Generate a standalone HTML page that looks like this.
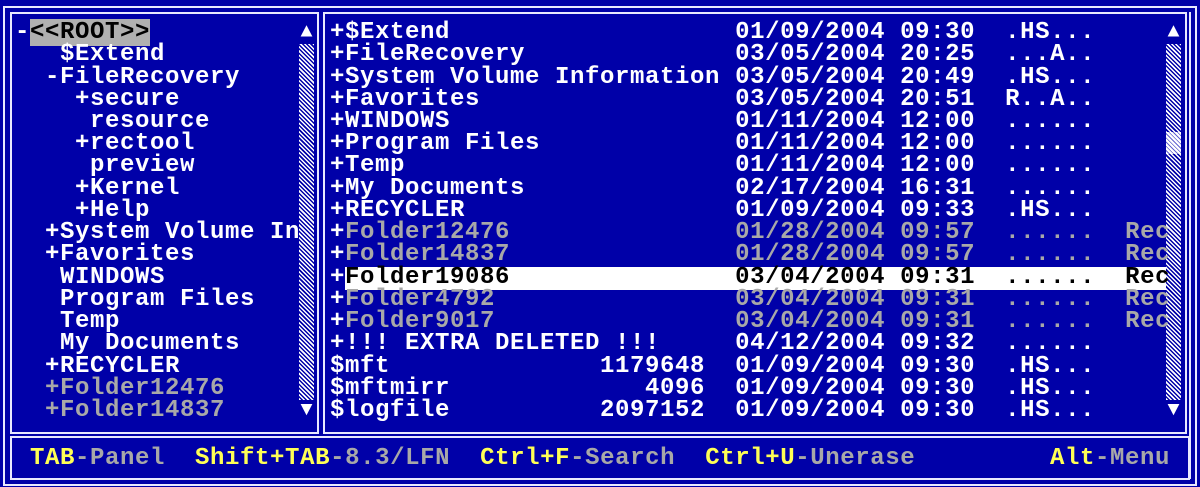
<!DOCTYPE html>
<html><head><meta charset="utf-8"><style>
body{margin:0;width:1200px;height:487px;background:#0000a8;overflow:hidden;position:relative;font-family:"Liberation Mono",monospace;font-weight:bold;font-size:24px;letter-spacing:0.6px;color:#fff}
.b{position:absolute;border:2px solid #e8e8ff}
pre{margin:0;position:absolute;font:inherit;letter-spacing:inherit;line-height:22px;white-space:pre}
.g{color:#a8a8a8}.y{color:#ffff55}
.hl{background:#fff;color:#000}
.rt{background:#b0b0b0;color:#000}
.sb{position:absolute;width:15px;background:repeating-linear-gradient(45deg,#fff 0 1.5px,#0000a8 1.5px 3px)}
.ar{position:absolute;font-size:20px;letter-spacing:0;line-height:22px;width:15px;text-align:center}
</style></head><body>
<div class="b" style="left:3px;top:6px;width:1190px;height:476px"></div>
<div class="b" style="left:10px;top:12px;width:305px;height:418px"></div>
<div class="b" style="left:323px;top:12px;width:860px;height:418px"></div>
<div class="b" style="left:10px;top:436px;width:1176px;height:40px"></div>
<div style="position:absolute;left:1189px;top:12px;width:2px;height:467px;background:#e8e8ff"></div>

<div class="hl" style="position:absolute;left:345px;top:267px;width:822px;height:23px"></div>

<pre style="left:15px;top:22px">-<span class="rt">&lt;&lt;ROOT&gt;&gt;</span></pre>
<pre style="left:15px;top:44.2px">   $Extend</pre>
<pre style="left:15px;top:66.5px">  -FileRecovery</pre>
<pre style="left:15px;top:88.7px">    +secure</pre>
<pre style="left:15px;top:111px">     resource</pre>
<pre style="left:15px;top:133.2px">    +rectool</pre>
<pre style="left:15px;top:155.4px">     preview</pre>
<pre style="left:15px;top:177.7px">    +Kernel</pre>
<pre style="left:15px;top:199.9px">    +Help</pre>
<pre style="left:15px;top:222.2px">  +System Volume In</pre>
<pre style="left:15px;top:244.4px">  +Favorites</pre>
<pre style="left:15px;top:266.6px">   WINDOWS</pre>
<pre style="left:15px;top:288.9px">   Program Files</pre>
<pre style="left:15px;top:311.1px">   Temp</pre>
<pre style="left:15px;top:333.4px">   My Documents</pre>
<pre style="left:15px;top:355.6px">  +RECYCLER</pre>
<pre style="left:15px;top:377.8px" class="g">  +Folder12476</pre>
<pre style="left:15px;top:400.1px" class="g">  +Folder14837</pre>

<div class="sb" style="left:299px;top:44px;height:356px"></div>
<div class="ar" style="left:299px;top:22px">▲</div>
<div class="ar" style="left:299px;top:400px">▼</div>
<div class="sb" style="left:1166px;top:44px;height:356px"></div>
<div style="position:absolute;left:1166px;top:132px;width:15px;height:22px;background:repeating-linear-gradient(45deg,#fff 0 2px,#6060d0 2px 3px)"></div>
<div class="ar" style="left:1166px;top:22px">▲</div>
<div class="ar" style="left:1166px;top:400px">▼</div>

<pre style="left:330px;top:22px">+$Extend                   01/09/2004 09:30  .HS...</pre>
<pre style="left:330px;top:44.2px">+FileRecovery              03/05/2004 20:25  ...A..</pre>
<pre style="left:330px;top:66.5px">+System Volume Information 03/05/2004 20:49  .HS...</pre>
<pre style="left:330px;top:88.7px">+Favorites                 03/05/2004 20:51  R..A..</pre>
<pre style="left:330px;top:111px">+WINDOWS                   01/11/2004 12:00  ......</pre>
<pre style="left:330px;top:133.2px">+Program Files             01/11/2004 12:00  ......</pre>
<pre style="left:330px;top:155.4px">+Temp                      01/11/2004 12:00  ......</pre>
<pre style="left:330px;top:177.7px">+My Documents              02/17/2004 16:31  ......</pre>
<pre style="left:330px;top:199.9px">+RECYCLER                  01/09/2004 09:33  .HS...</pre>
<pre style="left:330px;top:222.2px">+<span class="g">Folder12476               01/28/2004 09:57  ......  Rec</span></pre>
<pre style="left:330px;top:244.4px">+<span class="g">Folder14837               01/28/2004 09:57  ......  Rec</span></pre>
<pre style="left:330px;top:266.6px">+<span style="color:#000">Folder19086               03/04/2004 09:31  ......  Rec</span></pre>
<pre style="left:330px;top:288.9px">+<span class="g">Folder4792                03/04/2004 09:31  ......  Rec</span></pre>
<pre style="left:330px;top:311.1px">+<span class="g">Folder9017                03/04/2004 09:31  ......  Rec</span></pre>
<pre style="left:330px;top:333.4px">+!!! EXTRA DELETED !!!     04/12/2004 09:32  ......</pre>
<pre style="left:330px;top:355.6px">$mft              1179648  01/09/2004 09:30  .HS...</pre>
<pre style="left:330px;top:377.8px">$mftmirr             4096  01/09/2004 09:30  .HS...</pre>
<pre style="left:330px;top:400.1px">$logfile          2097152  01/09/2004 09:30  .HS...</pre>

<pre style="left:30px;top:448px"><span class="y">TAB</span><span class="g">-Panel</span>  <span class="y">Shift+TAB</span><span class="g">-8.3/LFN</span>  <span class="y">Ctrl+F</span><span class="g">-Search</span>  <span class="y">Ctrl+U</span><span class="g">-Unerase</span></pre>
<pre style="left:1050px;top:448px"><span class="y">Alt</span><span class="g">-Menu</span></pre>
</body></html>
